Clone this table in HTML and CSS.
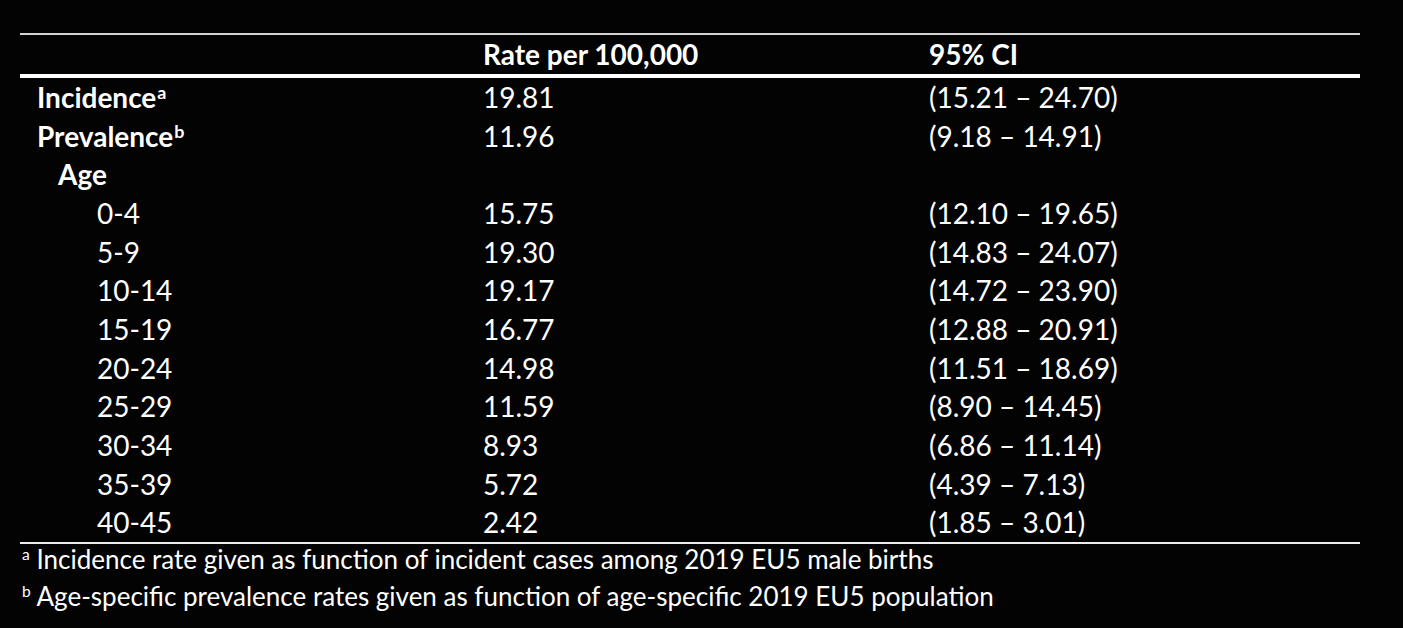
FILE: index.html
```html
<!DOCTYPE html>
<html lang="en">
<head>
<meta charset="utf-8">
<title>Incidence and prevalence rates</title>
<link rel="stylesheet" href="styles.css">
</head>
<body>
<div class="wrap">
  <table class="rates">
    <thead>
      <tr>
        <th class="c1"></th>
        <th class="c2">Rate per 100,000</th>
        <th class="c3">95% CI</th>
      </tr>
    </thead>
    <tbody>
      <tr><td class="c1 lvl0 b">Incidence<sup>a</sup></td><td class="c2">19.81</td><td class="c3">(15.21 – 24.70)</td></tr>
      <tr><td class="c1 lvl0 b">Prevalence<sup>b</sup></td><td class="c2">11.96</td><td class="c3">(9.18 – 14.91)</td></tr>
      <tr><td class="c1 lvl1 b">Age</td><td class="c2"></td><td class="c3"></td></tr>
      <tr><td class="c1 lvl2">0-4</td><td class="c2">15.75</td><td class="c3">(12.10 – 19.65)</td></tr>
      <tr><td class="c1 lvl2">5-9</td><td class="c2">19.30</td><td class="c3">(14.83 – 24.07)</td></tr>
      <tr><td class="c1 lvl2">10-14</td><td class="c2">19.17</td><td class="c3">(14.72 – 23.90)</td></tr>
      <tr><td class="c1 lvl2">15-19</td><td class="c2">16.77</td><td class="c3">(12.88 – 20.91)</td></tr>
      <tr><td class="c1 lvl2">20-24</td><td class="c2">14.98</td><td class="c3">(11.51 – 18.69)</td></tr>
      <tr><td class="c1 lvl2">25-29</td><td class="c2">11.59</td><td class="c3">(8.90 – 14.45)</td></tr>
      <tr><td class="c1 lvl2">30-34</td><td class="c2">8.93</td><td class="c3">(6.86 – 11.14)</td></tr>
      <tr><td class="c1 lvl2">35-39</td><td class="c2">5.72</td><td class="c3">(4.39 – 7.13)</td></tr>
      <tr class="last"><td class="c1 lvl2">40-45</td><td class="c2">2.42</td><td class="c3">(1.85 – 3.01)</td></tr>
    </tbody>
  </table>
  <div class="notes">
    <p><sup>a</sup> Incidence rate given as function of incident cases among 2019 EU5 male births</p>
    <p><sup>b</sup> Age-specific prevalence rates given as function of age-specific 2019 EU5 population</p>
  </div>
</div>
</body>
</html>
```

FILE: styles.css
```css
html, body {
  margin: 0;
  padding: 0;
  background: #030303;
}

body {
  color: #ffffff;
  font-family: Lato, "Open Sans", "Liberation Sans", sans-serif;
  width: 1403px;
  height: 628px;
  overflow: hidden;
}

.wrap {
  padding-top: 33px;
  padding-left: 20px;
  width: 1340px;
}

.rates {
  width: 1340px;
  border-collapse: collapse;
  table-layout: fixed;
  font-size: 28px;
  border-top: 2px solid #d4d4d4;
}

.rates th,
.rates td {
  padding: 0;
  text-align: left;
  vertical-align: middle;
  white-space: nowrap;
}

.rates thead tr {
  border-bottom: 4px solid #ffffff;
}

.rates th {
  font-weight: 700;
  line-height: 39px;
}

.rates td {
  line-height: 38.67px;
  height: 38.67px;
}

.rates tbody tr.last {
  border-bottom: 2px solid #ededed;
}

.c1 { width: 463px; }
.c2 { width: 446px; }
.c3 { width: 431px; }

.lvl0 { padding-left: 17px !important; }
.lvl1 { padding-left: 38px !important; }
.lvl2 { padding-left: 77px !important; }

.b { font-weight: 700; }

.rates sup {
  font-size: 0.64em;
  vertical-align: 0.5em;
  line-height: 0;
  margin-left: 1px;
}

.notes {
  padding-left: 2px;
  font-size: 26px;
  display: flex;
  flex-direction: column;
  gap: 7px;
}

.notes p {
  margin: 0;
  line-height: 30px;
}

.notes sup {
  font-size: 0.6em;
  vertical-align: 0.55em;
  line-height: 0;
}
```
